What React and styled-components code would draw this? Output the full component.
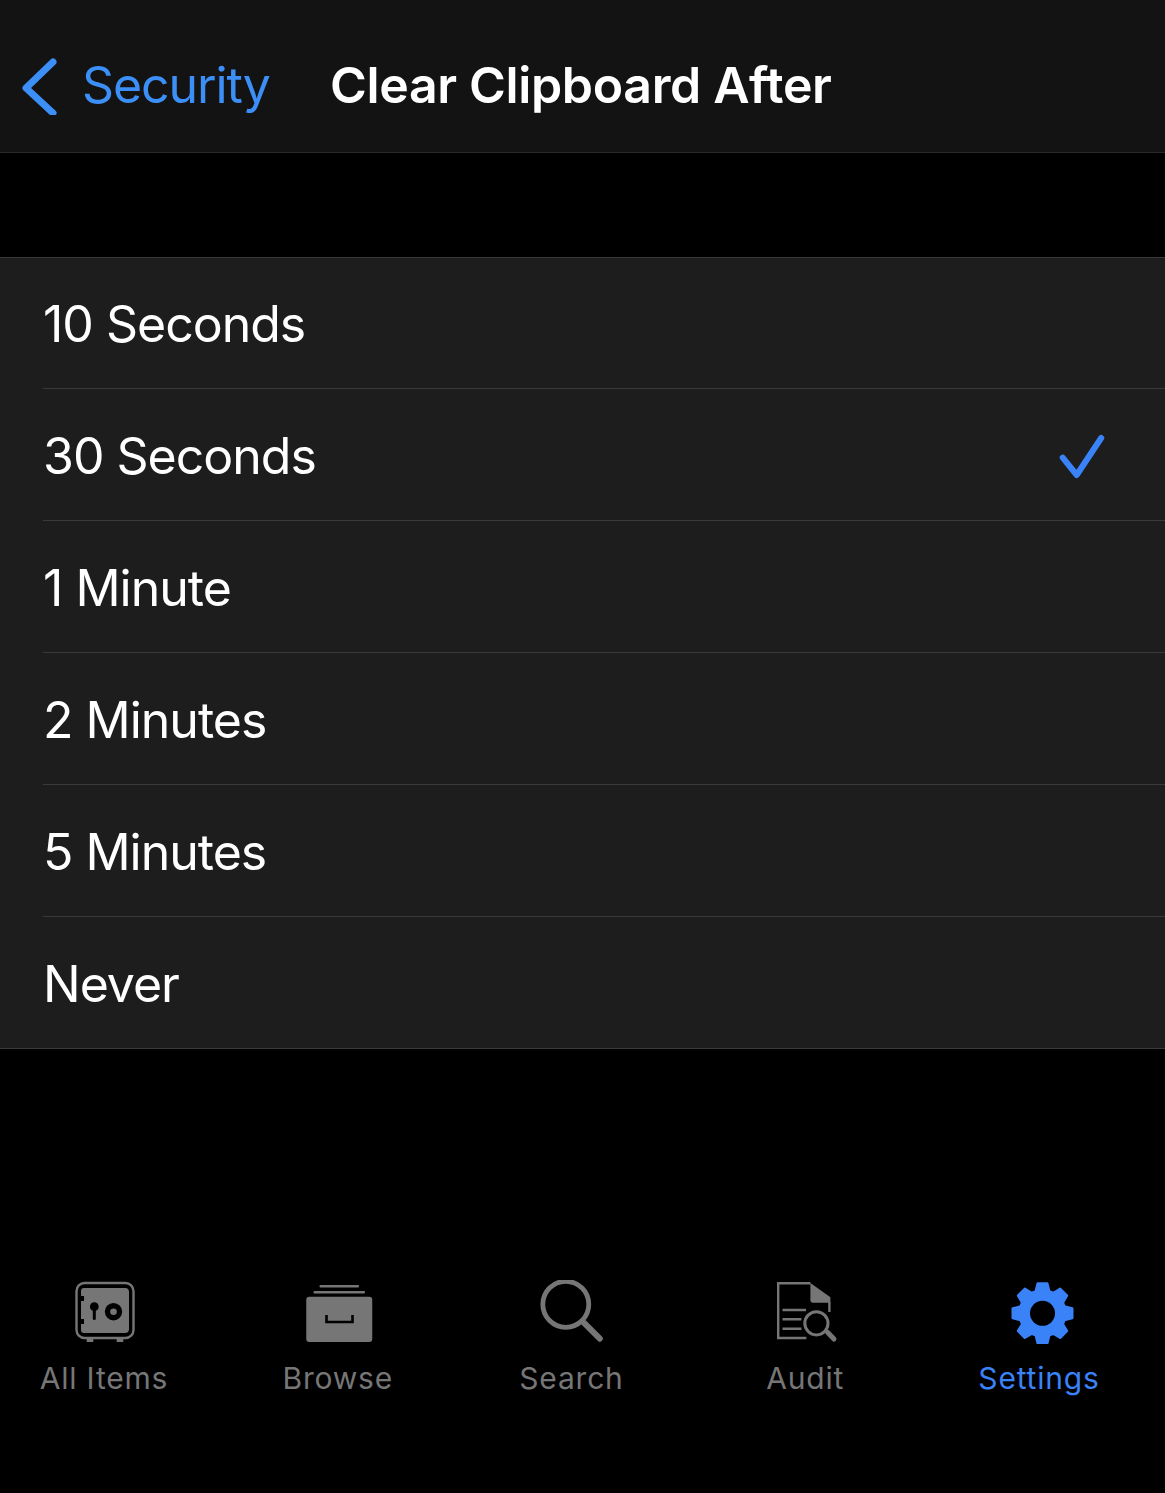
import React from 'react'
import styled, { createGlobalStyle } from 'styled-components'

const GlobalStyle = createGlobalStyle`
  html, body {
    margin: 0;
    padding: 0;
    background: #000;
    font-family: Inter, "Noto Sans", "Liberation Sans", sans-serif;
  }
`

const Page = styled.div`
  width: 1165px;
  height: 1493px;
  overflow: hidden;
  display: flex;
  flex-direction: column;
  background: #000;
`

const Header = styled.header`
  height: 134px;
  flex: none;
  display: flex;
  align-items: center;
  padding: 18px 0 0 20px;
  background: #131313;
  border-bottom: 1px solid #2a2a2a;
`

const BackLink = styled.a`
  display: flex;
  align-items: center;
  width: 310px;
  flex: none;
  font-size: 50px;
  letter-spacing: -1.1px;
  color: #3b8ff6;
`

const BackIcon = styled.svg`
  width: 40px;
  height: 60px;
  margin-right: 22px;
  flex: none;
`

const Title = styled.h1`
  margin: 0;
  font-size: 50px;
  font-weight: 600;
  letter-spacing: -0.35px;
  color: #fff;
`

const List = styled.ul`
  list-style: none;
  margin: 104px 0 0;
  padding: 0;
  background: #1d1d1d;
  border-top: 1px solid #3a3a3a;
  border-bottom: 1px solid #3a3a3a;
`

const Row = styled.li`
  height: 128px;
  margin-left: 43px;
  padding: 3px 57px 0 0;
  display: flex;
  align-items: center;
  justify-content: space-between;
  font-size: 50px;
  letter-spacing: -1px;
  color: #fff;
  border-bottom: ${({ $last }) => ($last ? 'none' : '1px solid #3a3a3a')};

  &:first-child {
    height: 129px;
    padding-top: 1px;
  }
`

const Check = styled.svg`
  width: 50px;
  height: 50px;
  flex: none;
`

const TabBar = styled.nav`
  margin-top: 231px;
  display: grid;
  grid-template-columns: repeat(5, 208px);
  column-gap: 25.75px;
`

const Tab = styled.a`
  display: flex;
  flex-direction: column;
  align-items: center;
  color: ${({ $active }) => ($active ? '#3a82f7' : '#767676')};
`

const TabIcon = styled.svg`
  width: 76px;
  height: 64px;
  display: block;
`

const TabLabel = styled.span`
  margin-top: 16px;
  font-size: 30px;
  line-height: 37px;
  letter-spacing: 0.8px;
`

const SafeIcon = () => (
  <TabIcon viewBox="0 0 76 64">
    <rect x="10.5" y="3" width="57" height="55" rx="8" fill="none" stroke="currentColor" strokeWidth="2.4" />
    <path
      fill="currentColor"
      d="M18 8H59a4 4 0 0 1 4 4V49a4 4 0 0 1-4 4H18a3 3 0 0 1-3-3V44h3V39h-3V21h3V16h-3V11a3 3 0 0 1 3-3Z"
    />
    <circle cx="28.3" cy="26.7" r="4.4" fill="#000" />
    <rect x="26.8" y="27" width="3" height="13" rx="1.5" fill="#000" />
    <circle cx="47.5" cy="31.7" r="8.7" fill="#000" />
    <circle cx="47.5" cy="31.7" r="3.3" fill="currentColor" />
    <rect x="20.7" y="58" width="6.6" height="4" fill="currentColor" />
    <rect x="50.7" y="58" width="6.6" height="4" fill="currentColor" />
  </TabIcon>
)

const BrowseIcon = () => (
  <TabIcon viewBox="0 0 76 64">
    <rect x="19.5" y="5" width="39.5" height="2.5" rx="1" fill="currentColor" />
    <rect x="13.5" y="11" width="51.5" height="2.5" rx="1" fill="currentColor" />
    <rect x="6.25" y="16.7" width="66" height="45.3" rx="3" fill="currentColor" />
    <path d="M26.5 35V42H52.5V35" fill="none" stroke="#000" strokeWidth="2.6" />
  </TabIcon>
)

const SearchIcon = () => (
  <TabIcon viewBox="0 0 76 64">
    <circle cx="31.8" cy="24.3" r="23" fill="none" stroke="currentColor" strokeWidth="4.8" />
    <path d="M48.8 41.7L65.8 58.7" stroke="currentColor" strokeWidth="6" strokeLinecap="round" />
  </TabIcon>
)

const AuditIcon = () => (
  <TabIcon viewBox="0 0 76 64">
    <path
      d="M39.4 58H11.2V3.2H43.4M62.4 22V32"
      fill="none"
      stroke="currentColor"
      strokeWidth="2.4"
    />
    <path d="M43.4 3L63.4 17.3V22.7H46a2.6 2.6 0 0 1-2.6-2.6Z" fill="currentColor" />
    <path
      d="M15.5 30H39M15.5 39.3H34.4M15.5 48.7H34.4"
      stroke="currentColor"
      strokeWidth="2.4"
    />
    <circle cx="49.4" cy="43.3" r="11.6" fill="none" stroke="currentColor" strokeWidth="3" />
    <path d="M60.5 52.3L67 59" stroke="currentColor" strokeWidth="5" strokeLinecap="round" />
  </TabIcon>
)

// eight teeth around the centre, worked out instead of typed by hand
const gearPoints = () => {
  const cx = 41.5
  const cy = 33.3
  const pts = []
  for (let i = 0; i < 8; i++) {
    const a = (i * Math.PI) / 4 - Math.PI / 2
    const at = (r, da) => `${(cx + r * Math.cos(a + da)).toFixed(2)},${(cy + r * Math.sin(a + da)).toFixed(2)}`
    pts.push(at(23, -0.3), at(30.2, -0.16), at(30.2, 0.16), at(23, 0.3))
  }
  return pts.join(' ')
}

const GearIcon = () => (
  <TabIcon viewBox="0 0 76 64">
    <polygon points={gearPoints()} fill="currentColor" stroke="currentColor" strokeWidth="2.4" strokeLinejoin="round" />
    <circle cx="41.5" cy="33.3" r="12.5" fill="#000" />
  </TabIcon>
)

const options = ['10 Seconds', '30 Seconds', '1 Minute', '2 Minutes', '5 Minutes', 'Never']

const tabs = [
  { label: 'All Items', Icon: SafeIcon },
  { label: 'Browse', Icon: BrowseIcon },
  { label: 'Search', Icon: SearchIcon },
  { label: 'Audit', Icon: AuditIcon },
  { label: 'Settings', Icon: GearIcon, active: true },
]

const App = () => (
  <Page>
    <GlobalStyle />
    <Header>
      <BackLink>
        <BackIcon viewBox="0 0 40 60">
          <path
            d="M33 7L6 33L33 58"
            fill="none"
            stroke="currentColor"
            strokeWidth="7"
            strokeLinecap="round"
            strokeLinejoin="round"
          />
        </BackIcon>
        Security
      </BackLink>
      <Title>Clear Clipboard After</Title>
    </Header>
    <List>
      {options.map((option, i) => (
        <Row key={option} $last={i === options.length - 1}>
          {option}
          {option === '30 Seconds' && (
            <Check viewBox="0 0 50 50">
              <path
                d="M4.7 26.7L18.7 44L43.2 7"
                fill="none"
                stroke="#3a82f7"
                strokeWidth="6"
                strokeLinecap="round"
                strokeLinejoin="round"
              />
            </Check>
          )}
        </Row>
      ))}
    </List>
    <TabBar>
      {tabs.map(({ label, Icon, active }) => (
        <Tab key={label} $active={active}>
          <Icon />
          <TabLabel>{label}</TabLabel>
        </Tab>
      ))}
    </TabBar>
  </Page>
)

export default App
